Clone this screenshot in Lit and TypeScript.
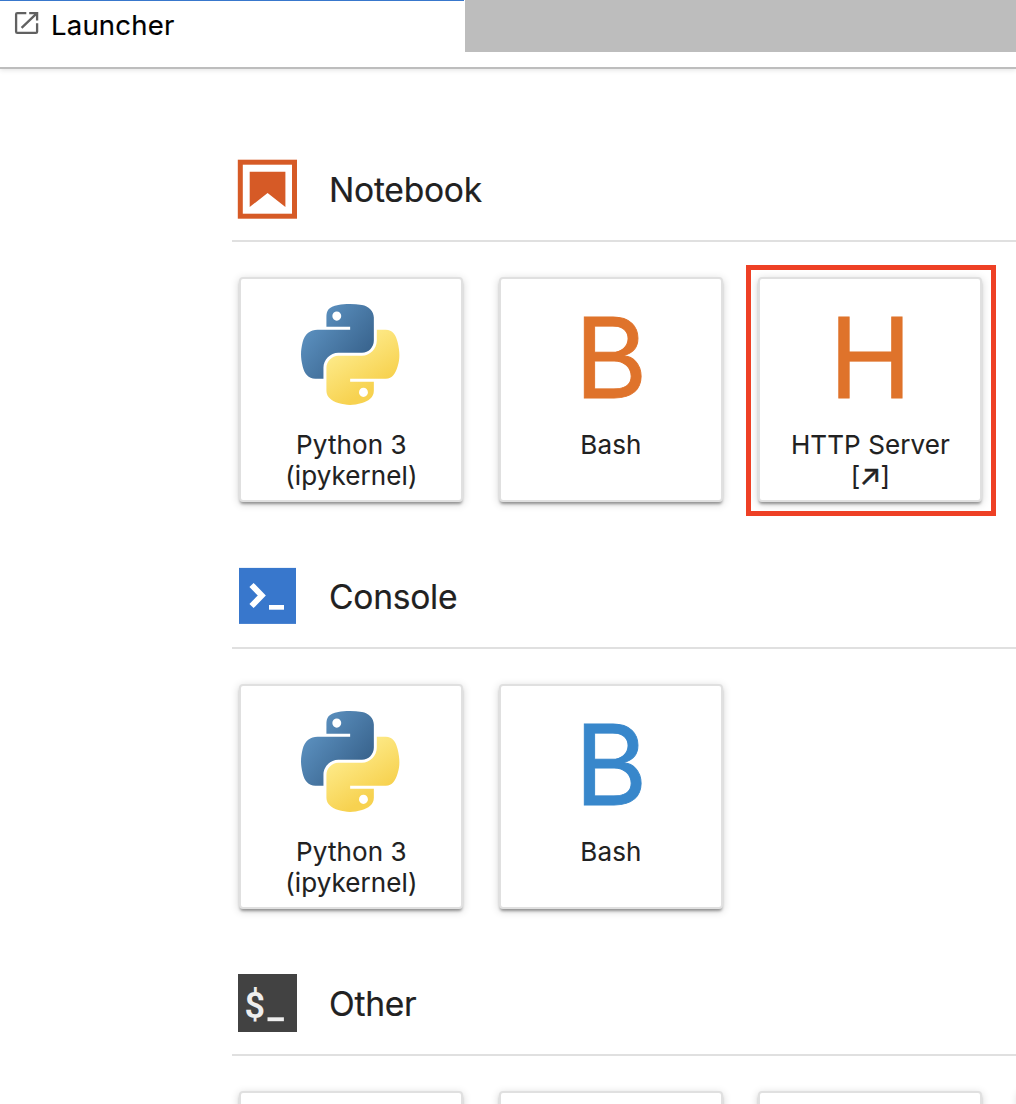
import { LitElement, html, css, svg, nothing } from "lit";
import { customElement, property } from "lit/decorators.js";

type Card = { label: string[]; icon: "python" | "letter" | "none"; letter?: string; tone?: string; marked?: boolean };
type Section = { title: string; icon: string; cards: Card[] };

const SECTIONS: Section[] = [
  {
    title: "Notebook",
    icon: "notebook",
    cards: [
      { label: ["Python 3", "(ipykernel)"], icon: "python" },
      { label: ["Bash"], icon: "letter", letter: "B", tone: "orange" },
      { label: ["HTTP Server", "[↗]"], icon: "letter", letter: "H", tone: "orange", marked: true },
    ],
  },
  {
    title: "Console",
    icon: "console",
    cards: [
      { label: ["Python 3", "(ipykernel)"], icon: "python" },
      { label: ["Bash"], icon: "letter", letter: "B", tone: "blue" },
    ],
  },
  {
    title: "Other",
    icon: "terminal",
    cards: [
      { label: [], icon: "none" },
      { label: [], icon: "none" },
      { label: [], icon: "none" },
      { label: [], icon: "none" },
    ],
  },
];

const sectionIcon = (name: string) => {
  const body =
    name === "notebook"
      ? svg`<rect x="2.3" y="2.2" width="54.2" height="54" fill="#fff" stroke="#d65a26" stroke-width="5"/>
            <path d="M11.7 11.7H47.4V47L29.6 33L11.7 47Z" fill="#d65a26"/>`
      : name === "console"
      ? svg`<rect x="1" y="0.9" width="57" height="56" fill="#3877cc"/>
            <path d="M13.5 17.9L23.8 28.5L13.5 39.1" fill="none" stroke="#fff" stroke-width="5.8"/>
            <rect x="31" y="38" width="15" height="4.7" fill="#fff"/>`
      : svg`<rect x="0" y="0" width="59" height="58" fill="#424242"/>
            <text x="6.6" y="43.8" class="dollar">$</text>
            <rect x="29.5" y="43.3" width="16.4" height="3.9" fill="#eee"/>`;
  return html`<svg class="section-icon" viewBox="0 0 59 59" aria-hidden="true">${body}</svg>`;
};

const pythonLogo = html`<svg class="python" viewBox="12.8 1.9 102.5 104.2" preserveAspectRatio="none" aria-hidden="true">
  <defs>
    <linearGradient id="blue" gradientUnits="userSpaceOnUse" x1="16" y1="8" x2="76" y2="58">
      <stop offset="0" stop-color="#6299c9" /><stop offset="1" stop-color="#3a658f" />
    </linearGradient>
    <linearGradient id="yellow" gradientUnits="userSpaceOnUse" x1="58" y1="48" x2="84" y2="90">
      <stop offset="0" stop-color="#fde986" /><stop offset="1" stop-color="#f7d250" />
    </linearGradient>
  </defs>
  <path fill="url(#blue)" d="M63.391 1.988c-4.222.02-8.252.379-11.8 1.007-10.45 1.846-12.346 5.71-12.346 12.837v9.411h24.693v3.137H29.977c-7.176 0-13.46 4.313-15.426 12.521-2.268 9.405-2.368 15.275 0 25.096 1.755 7.311 5.947 12.519 13.124 12.519h8.491V67.234c0-8.151 7.051-15.34 15.426-15.34h24.665c6.866 0 12.346-5.654 12.346-12.548V15.833c0-6.693-5.646-11.72-12.346-12.837-4.244-.706-8.645-1.027-12.866-1.008zM50.037 9.557c2.55 0 4.634 2.117 4.634 4.721 0 2.593-2.083 4.69-4.634 4.69-2.56 0-4.633-2.097-4.633-4.69-.001-2.604 2.073-4.721 4.633-4.721z" />
  <path fill="url(#yellow)" d="M91.682 28.38v10.966c0 8.5-7.208 15.655-15.426 15.655H51.591c-6.756 0-12.346 5.783-12.346 12.549v23.515c0 6.691 5.818 10.628 12.346 12.547 7.816 2.297 15.312 2.713 24.665 0 6.216-1.801 12.346-5.423 12.346-12.547v-9.412H63.938v-3.138h37.012c7.176 0 9.852-5.005 12.348-12.519 2.578-7.735 2.467-15.174 0-25.096-1.774-7.145-5.161-12.521-12.348-12.521h-9.268zM77.809 87.927c2.561 0 4.634 2.097 4.634 4.692 0 2.602-2.074 4.719-4.634 4.719-2.55 0-4.633-2.117-4.633-4.719 0-2.595 2.083-4.692 4.633-4.692z" />
</svg>`;

@customElement("launcher-card")
class LauncherCard extends LitElement {
  @property({ attribute: false }) card!: Card;

  static styles = css`
    :host { display: block; position: relative; flex: none; width: 224px; height: 225px; }
    .card {
      box-sizing: border-box; width: 100%; height: 100%;
      border: 2px solid #e0e0e0; border-radius: 4px; background: #fff;
      box-shadow: 0 3px 3px -1px rgba(0, 0, 0, 0.36), 0 2px 9px rgba(0, 0, 0, 0.18);
      display: flex; flex-direction: column; align-items: center;
    }
    .icon { height: 150px; display: flex; justify-content: center; flex: none; }
    .python { width: 98.5px; height: 101.5px; margin: 24.5px 2px 0 0; }
    .letter { font-size: 111.5px; line-height: 158px; font-weight: 400; -webkit-text-stroke: 0.9px currentColor; }
    .letter.orange { color: #df732b; }
    .letter.blue { color: #3887cb; }
    .label { color: #212121; font-size: 26px; line-height: 31px; letter-spacing: 0.1px; text-align: center; -webkit-text-stroke: 0.1px currentColor; }
    .line { height: 31px; }
    .arrow { font-size: 28.5px; line-height: 0; letter-spacing: -0.9px; margin-left: -0.9px; -webkit-text-stroke: 0.5px currentColor; }
    .mark { position: absolute; left: -12px; top: -12px; width: 240px; height: 241px; border: 5px solid #ee4025; }
  `;

  private line(text: string) {
    return html`<div class="line">${[...text].includes("↗") ? html`[<span class="arrow">↗</span>]` : text}</div>`;
  }

  render() {
    const c = this.card;
    return html`
      <div class="card">
        <div class="icon">
          ${c.icon === "python" ? pythonLogo : c.icon === "letter" ? html`<span class="letter ${c.tone}">${c.letter}</span>` : nothing}
        </div>
        <div class="label">${c.label.map((text) => this.line(text))}</div>
      </div>
      ${c.marked ? html`<div class="mark"></div>` : nothing}
    `;
  }
}

@customElement("app-root")
class AppRoot extends LitElement {
  static styles = css`
    :host {
      display: block; width: 1016px; height: 1104px; overflow: hidden; background: #fff;
      font-family: Inter, "Liberation Sans", sans-serif;
    }
    .bar {
      box-sizing: border-box; height: 69px; display: flex; align-items: flex-start;
      border-bottom: 2px solid #bdbdbd; box-shadow: 0 1px 5px rgba(0, 0, 0, 0.12);
    }
    .tab {
      box-sizing: border-box; width: 464px; height: 52px; margin-right: 1px; padding-left: 14px;
      display: flex; align-items: flex-start; border-top: 1px solid #3877cc;
    }
    .tab-icon { width: 26px; height: 24px; margin-top: 10px; }
    .tab-title { margin-left: 11px; font-size: 27.5px; line-height: 48px; color: #000; letter-spacing: 0.2px; -webkit-text-stroke: 0.15px currentColor; }
    .rest { flex: 1; height: 52px; background: #bdbdbd; }
    .body { padding: 91px 0 0 232px; }
    .section { height: 407px; box-sizing: border-box; }
    .head {
      box-sizing: border-box; height: 82px; padding-left: 6px; display: flex; align-items: flex-start;
      border-bottom: 2px solid #e0e0e0;
    }
    .section-icon { width: 59px; height: 59px; flex: none; overflow: visible; }
    .dollar { font: 600 36px Roboto, sans-serif; fill: #eee; }
    .title { margin-left: 32px; font-size: 33.6px; line-height: 60px; color: #212121; letter-spacing: -0.25px; -webkit-text-stroke: 0.2px currentColor; }
    .cards { display: flex; gap: 35.5px; padding: 35px 0 0 7.4px; }
  `;

  render() {
    return html`
      <div class="bar">
        <div class="tab">
          <svg class="tab-icon" viewBox="0 0 26 24" fill="none" stroke="#616161" stroke-width="2.3" aria-hidden="true">
            <path d="M12.3 2.1H3.3Q2.1 2.1 2.1 3.3V20.7Q2.1 21.9 3.3 21.9H21.9Q23.1 21.9 23.1 20.7V12.2" />
            <path d="M7.6 16.8L22.2 2.8M15.2 2.1H23.1V9.6" />
          </svg>
          <span class="tab-title">Launcher</span>
        </div>
        <div class="rest"></div>
      </div>
      <div class="body">
        ${SECTIONS.map(
          (s) => html`<div class="section">
            <div class="head">${sectionIcon(s.icon)}<span class="title">${s.title}</span></div>
            <div class="cards">${s.cards.map((c) => html`<launcher-card .card=${c}></launcher-card>`)}</div>
          </div>`
        )}
      </div>
    `;
  }
}
